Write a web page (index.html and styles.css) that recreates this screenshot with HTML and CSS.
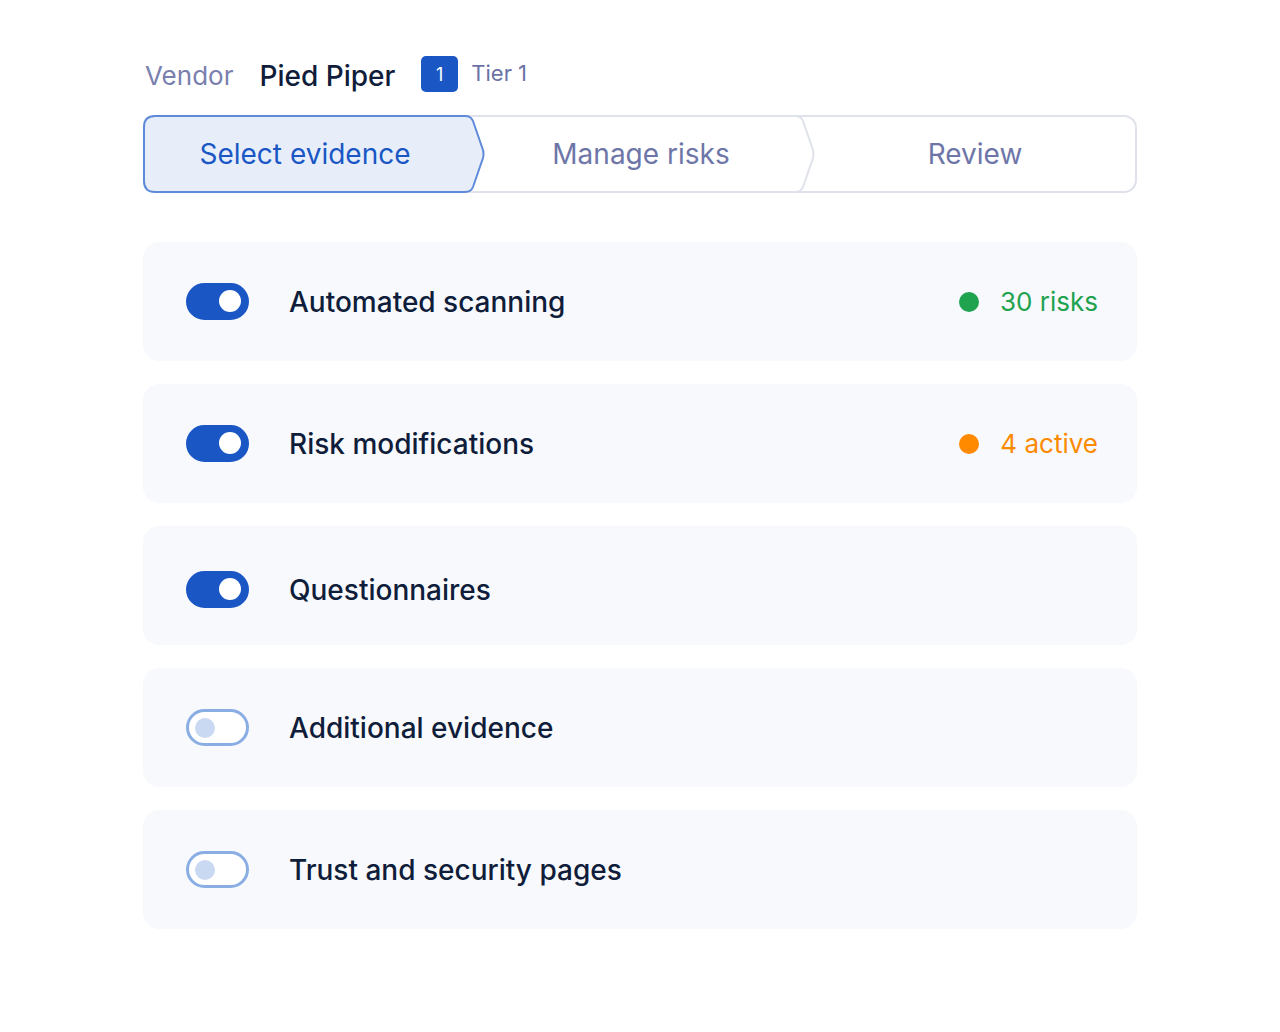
FILE: index.html
```html
<!DOCTYPE html>
<html lang="en">
<head>
  <meta charset="UTF-8">
  <title>Select evidence</title>
  <link rel="stylesheet" href="styles.css">
</head>
<body>
  <div class="page">

    <div class="vendor">
      <span class="vendor-label">Vendor</span>
      <span class="vendor-name">Pied Piper</span>
      <span class="tier-badge">1</span>
      <span class="tier-label">Tier 1</span>
    </div>

    <div class="stepper">
      <svg class="stepper-bg" width="994" height="78" viewBox="0 0 994 78">
        <rect x="1" y="1" width="992" height="76" rx="12" fill="#fff" stroke="#dfe2ea" stroke-width="2"/>
        <path d="M652,1 Q658,1 660,6 L670,35 Q671,39 670,43 L660,72 Q658,77 652,77" fill="none" stroke="#dfe2ea" stroke-width="2"/>
        <path d="M12,1 H322 Q328,1 330,6 L340,35 Q341,39 340,43 L330,72 Q328,77 322,77 H12 Q1,77 1,66 V12 Q1,1 12,1 Z" fill="#e7eefa" stroke="#5e8bd9" stroke-width="2"/>
      </svg>
      <div class="step active">Select evidence</div>
      <div class="step middle">Manage risks</div>
      <div class="step">Review</div>
    </div>

    <div class="sources">
      <div class="source">
        <span class="toggle on"></span>
        <span class="source-name">Automated scanning</span>
        <span class="status green"><i class="dot"></i>30 risks</span>
      </div>
      <div class="source">
        <span class="toggle on"></span>
        <span class="source-name">Risk modifications</span>
        <span class="status orange"><i class="dot"></i>4 active</span>
      </div>
      <div class="source low">
        <span class="toggle on"></span>
        <span class="source-name">Questionnaires</span>
      </div>
      <div class="source">
        <span class="toggle"></span>
        <span class="source-name">Additional evidence</span>
      </div>
      <div class="source">
        <span class="toggle"></span>
        <span class="source-name">Trust and security pages</span>
      </div>
    </div>

  </div>
</body>
</html>
```

FILE: styles.css
```css
body {
  margin: 0;
  background: #fff;
  font-family: Inter, "Noto Sans", sans-serif;
  color: #0f1d3a;
}

.page {
  width: 994px;
  margin: 0 auto;
  padding-top: 56px;
}

/* vendor header */
.vendor {
  display: flex;
  align-items: center;
  height: 36px;
  padding-left: 2px;
}
.vendor-label {
  font-size: 26px;
  color: #7a80ae;
  margin-top: 2px;
}
.vendor-name {
  font-size: 28px;
  font-weight: 500;
  color: #0f1d3a;
  margin-left: 26px;
  margin-top: 4px;
}
.tier-badge {
  width: 37px;
  height: 36px;
  margin-left: 26px;
  border-radius: 5px;
  background: #1a57c5;
  color: #fff;
  font-size: 18px;
  display: flex;
  align-items: center;
  justify-content: center;
}
.tier-label {
  font-size: 22px;
  color: #6b73a6;
  margin-left: 13px;
  margin-bottom: 2px;
}

/* steps */
.stepper {
  position: relative;
  display: flex;
  height: 78px;
  margin-top: 23px;
}
.stepper-bg {
  position: absolute;
  left: 0;
  top: 0;
}
.step {
  position: relative;
  flex: 1;
  display: flex;
  align-items: center;
  justify-content: center;
  font-size: 28px;
  color: #6e76a8;
}
.step.active {
  color: #1a57c5;
  padding-right: 12px;
}
.step.middle {
  padding-right: 10px;
}

/* evidence sources */
.sources {
  display: flex;
  flex-direction: column;
  gap: 23px;
  margin-top: 49px;
}
.source {
  display: flex;
  align-items: center;
  height: 119px;
  padding: 0 39px 0 43px;
  background: #f7f9fd;
  border-radius: 16px;
}
.source.low {
  padding-top: 8px;
  box-sizing: border-box;
}
.source-name {
  font-size: 28px;
  font-weight: 500;
  margin-left: 40px;
  flex: 1;
}

.toggle {
  position: relative;
  box-sizing: border-box;
  width: 63px;
  height: 37px;
  border-radius: 19px;
  border: 3px solid #8aaee4;
  background: #fff;
}
.toggle::after {
  content: "";
  position: absolute;
  top: 6px;
  left: 6px;
  width: 20px;
  height: 20px;
  border-radius: 50%;
  background: #c9d9f2;
}
.toggle.on {
  border-color: #1a57c5;
  background: #1a57c5;
}
.toggle.on::after {
  left: auto;
  right: 5px;
  top: 4px;
  width: 22px;
  height: 22px;
  background: #fff;
}

.status {
  display: flex;
  align-items: center;
  gap: 21px;
  font-size: 26px;
}
.dot {
  width: 20px;
  height: 20px;
  border-radius: 50%;
  background: currentColor;
}
.status.green { color: #21a24f; }
.status.green .dot { background: #1fa34f; }
.status.orange { color: #fb8a00; }
.status.orange .dot { background: #ff8a00; }
```
